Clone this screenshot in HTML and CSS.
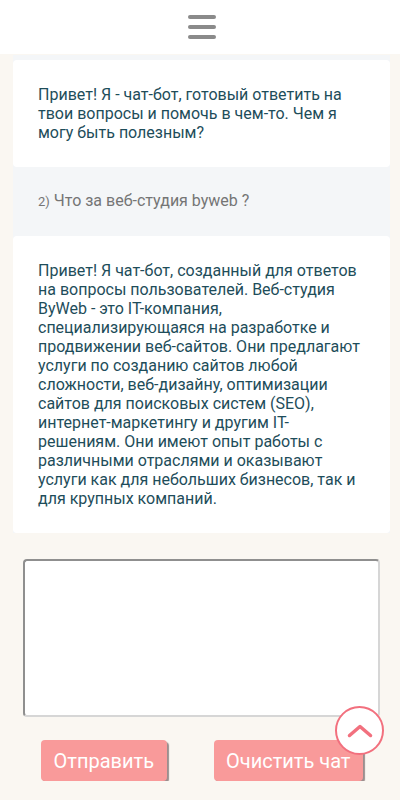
FILE: index.html
```html
<!DOCTYPE html>
<html lang="ru">
<head>
    <meta charset="UTF-8">
    <meta name="viewport" content="width=device-width, initial-scale=1.0">
    <title>Чат-бот ByWeb</title>
    <link rel="stylesheet" href="styles.css">
</head>
<body>
    <header class="header">
        <button class="menu-toggle" aria-label="Меню">
            <span></span>
            <span></span>
            <span></span>
        </button>
    </header>

    <div class="chat" id="chat">
        <div class="message">
            Привет! Я - чат-бот, готовый ответить на твои вопросы и помочь в чем-то. Чем я могу быть полезным?
        </div>
        <div class="question">
            <span class="question-num">2)</span> Что за веб-студия byweb ?
        </div>
        <div class="message">
            Привет! Я чат-бот, созданный для ответов на вопросы пользователей. Веб-студия ByWeb - это IT-компания, специализирующаяся на разработке и продвижении веб-сайтов. Они предлагают услуги по созданию сайтов любой сложности, веб-дизайну, оптимизации сайтов для поисковых систем (SEO), интернет-маркетингу и другим IT-решениям. Они имеют опыт работы с различными отраслями и оказывают услуги как для небольших бизнесов, так и для крупных компаний.
        </div>
    </div>

    <form class="chat-form">
        <textarea class="chat-input" id="question"></textarea>
        <div class="chat-actions">
            <button type="submit" class="btn">Отправить</button>
            <button type="button" class="btn btn-clear">Очистить чат</button>
        </div>
    </form>

    <button class="to-top" aria-label="Наверх">
        <svg width="26" height="14" viewBox="0 0 26 14">
            <path d="M2.5 11.5 L13 2.5 L23.5 11.5" fill="none" stroke="#f2707e" stroke-width="3.5" stroke-linecap="round" stroke-linejoin="round"/>
        </svg>
    </button>
</body>
</html>
```

FILE: styles.css
```css
body {
    margin: 0;
    background-color: #faf7f2;
    font-family: Roboto, 'Liberation Sans', sans-serif;
}

.header {
    height: 54px;
    background-color: white;
    display: flex;
    justify-content: center;
    align-items: center;
}

.menu-toggle {
    display: flex;
    flex-direction: column;
    gap: 6px;
    padding: 0;
    margin-left: 3px;
    background: none;
    border: none;
    cursor: pointer;
}

.menu-toggle span {
    display: block;
    width: 28px;
    height: 4px;
    border-radius: 2px;
    background-color: #8a8a8a;
}

.chat {
    margin: 1px 10px 0 13px;
    padding-top: 5px;
    background-color: #f4f6f8;
}

.message {
    background-color: white;
    border-radius: 4px;
    padding: 25px;
    color: #1e4d5a;
    font-size: 16px;
    line-height: 19px;
}

.question {
    padding: 24px 25px;
    color: #757575;
    font-size: 16px;
    line-height: 20px;
}

.question-num {
    font-size: 13px;
}

.chat-form {
    margin-top: 26px;
}

.chat-input {
    display: block;
    box-sizing: border-box;
    width: 357px;
    height: 158px;
    margin-left: 23px;
    border: 2px solid #d6d6d6;
    border-top-color: #8f8f8f;
    border-left-color: #8f8f8f;
    border-radius: 4px;
    background-color: white;
    resize: none;
}

.chat-actions {
    display: flex;
    gap: 47px;
    padding-left: 41px;
    margin-top: 23px;
}

.btn {
    height: 41px;
    padding: 0 12.5px;
    border: none;
    border-radius: 4px;
    background-color: #f99a9a;
    color: white;
    font-family: Roboto, 'Liberation Sans', sans-serif;
    font-size: 20px;
    box-shadow: 2px 2px 1px #9b8e8e;
    cursor: pointer;
}

.to-top {
    position: fixed;
    right: 16px;
    bottom: 45px;
    width: 49px;
    height: 49px;
    padding: 0;
    border: 2px solid #f2707e;
    border-radius: 50%;
    background-color: white;
    display: flex;
    justify-content: center;
    align-items: center;
    cursor: pointer;
}
```
